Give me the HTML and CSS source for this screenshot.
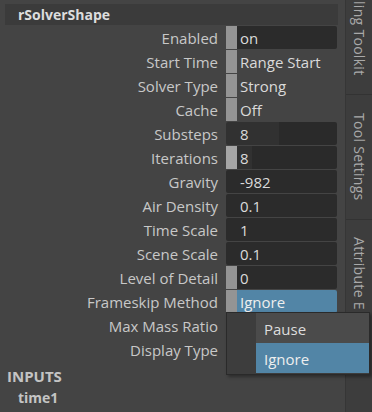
FILE: index.html
```html
<!DOCTYPE html>
<html lang="en">
<head>
    <meta charset="UTF-8">
    <meta name="viewport" content="width=device-width, initial-scale=1.0">
    <title>Attribute Editor - rSolverShape</title>
    <link rel="stylesheet" href="styles.css">
</head>
<body>
    <div class="window">
        <div class="editor">
            <div class="header">rSolverShape</div>

            <div class="attrs">
                <div class="row">
                    <span class="label">Enabled</span>
                    <div class="field"><span class="ind"></span><span class="value dark">on</span></div>
                </div>
                <div class="row">
                    <span class="label">Start Time</span>
                    <div class="field"><span class="ind"></span><span class="value">Range Start</span></div>
                </div>
                <div class="row">
                    <span class="label">Solver Type</span>
                    <div class="field"><span class="ind"></span><span class="value">Strong</span></div>
                </div>
                <div class="row">
                    <span class="label">Cache</span>
                    <div class="field"><span class="ind"></span><span class="value">Off</span></div>
                </div>
                <div class="row">
                    <span class="label">Substeps</span>
                    <div class="field"><span class="value num slider-wide">8</span></div>
                </div>
                <div class="row">
                    <span class="label">Iterations</span>
                    <div class="field"><span class="ind light"></span><span class="value slider-narrow">8</span></div>
                </div>
                <div class="row">
                    <span class="label">Gravity</span>
                    <div class="field"><span class="value num dark">-982</span></div>
                </div>
                <div class="row">
                    <span class="label">Air Density</span>
                    <div class="field"><span class="value num dark">0.1</span></div>
                </div>
                <div class="row">
                    <span class="label">Time Scale</span>
                    <div class="field"><span class="value num dark">1</span></div>
                </div>
                <div class="row">
                    <span class="label">Scene Scale</span>
                    <div class="field"><span class="value num dark">0.1</span></div>
                </div>
                <div class="row">
                    <span class="label">Level of Detail</span>
                    <div class="field"><span class="ind"></span><span class="value dark">0</span></div>
                </div>
                <div class="row">
                    <span class="label">Frameskip Method</span>
                    <div class="field"><span class="ind"></span><span class="value selected">Ignore</span></div>
                </div>
                <div class="row">
                    <span class="label">Max Mass Ratio</span>
                    <div class="field"></div>
                </div>
                <div class="row">
                    <span class="label">Display Type</span>
                    <div class="field"></div>
                </div>
            </div>

            <div class="section">INPUTS</div>
            <div class="node">time1</div>
        </div>

        <div class="tabs">
            <div class="tab tab-first"><span class="tab-text">ling Toolkit</span></div>
            <div class="tab tab-middle"><span class="tab-text">Tool Settings</span></div>
            <div class="tab tab-last"><span class="tab-text">Attribute E</span></div>
        </div>

        <!-- open option menu for Frameskip Method -->
        <div class="popup">
            <div class="popup-gutter"></div>
            <div class="popup-items">
                <div class="popup-item">Pause</div>
                <div class="popup-item active">Ignore</div>
            </div>
        </div>
    </div>
</body>
</html>
```

FILE: styles.css
```css
body {
    margin: 0;
    background-color: #444444;
    font-family: "Open Sans", "Noto Sans", sans-serif;
    color: #c8c8c8;
}
.window {
    position: relative;
    display: flex;
    width: 372px;
    height: 412px;
    overflow: hidden;
}
.editor {
    flex: 1;
    padding: 4px 0 0 5px;
}
.header {
    width: 333px;
    height: 21px;
    line-height: 21px;
    padding-left: 13px;
    box-sizing: border-box;
    background-color: #3b3b3b;
    font-size: 14px;
    font-weight: bold;
    color: #dddddd;
    margin-bottom: 1px;
}
.row {
    display: grid;
    grid-template-columns: 213px 111px;
    column-gap: 8px;
    height: 24px;
}
.label {
    text-align: right;
    font-size: 15px;
    line-height: 25px;
    white-space: nowrap;
}
.field {
    display: flex;
    height: 23px;
}
.ind {
    width: 11px;
    background-color: #949494;
}
.ind.light {
    background-color: #a6a6a6;
}
.value {
    flex: 1;
    padding-left: 3px;
    font-size: 15px;
    line-height: 25px;
    color: #dadada;
    border-radius: 0 2px 2px 0;
}
.value.num {
    padding-left: 14px;
    border-radius: 2px;
}
.value.dark {
    background-color: #2b2b2b;
}
.slider-wide {
    background: linear-gradient(to right, #313131 53px, #2a2a2a 53px);
}
.slider-narrow {
    background: linear-gradient(to right, #313131 15px, #2a2a2a 15px);
}
.value.selected {
    background-color: #5285a6;
    color: #eeeeee;
}
.section {
    margin-top: 1px;
    padding-left: 2px;
    height: 24px;
    line-height: 26px;
    font-size: 15px;
    font-weight: bold;
    color: #c4c4c4;
}
.node {
    padding-left: 13px;
    height: 22px;
    line-height: 22px;
    font-size: 14px;
    font-weight: bold;
    color: #c4c4c4;
}
.tabs {
    width: 26px;
    display: flex;
    flex-direction: column;
    background-color: #3d3d3d;
    border-left: 1px solid #363636;
}
.tab {
    display: flex;
    flex-direction: column;
    align-items: center;
    overflow: hidden;
    border-bottom: 1px solid #333333;
    box-sizing: border-box;
}
.tab-text {
    writing-mode: vertical-rl;
    font-size: 14px;
    letter-spacing: 0.3px;
    color: #a9a9a9;
    white-space: nowrap;
}
.tab-first {
    height: 95px;
    padding-top: 1px;
}
.tab-middle {
    height: 125px;
    justify-content: center;
}
.tab-last {
    flex: 1;
    padding-top: 17px;
    border-bottom: none;
}
.popup {
    position: absolute;
    left: 226px;
    top: 312px;
    width: 144px;
    height: 63px;
    display: flex;
    border: 1px solid #2a2a2a;
    box-sizing: border-box;
    box-shadow: 2px 2px 3px rgba(0, 0, 0, 0.35);
    background-color: #3d3d3d;
}
.popup-gutter {
    width: 29px;
}
.popup-items {
    flex: 1;
    display: flex;
    flex-direction: column;
}
.popup-item {
    height: 30px;
    line-height: 32px;
    padding-left: 8px;
    font-size: 15px;
    color: #dddddd;
    background-color: #4b4b4b;
}
.popup-item.active {
    background-color: #5285a6;
    color: #eeeeee;
}
```
